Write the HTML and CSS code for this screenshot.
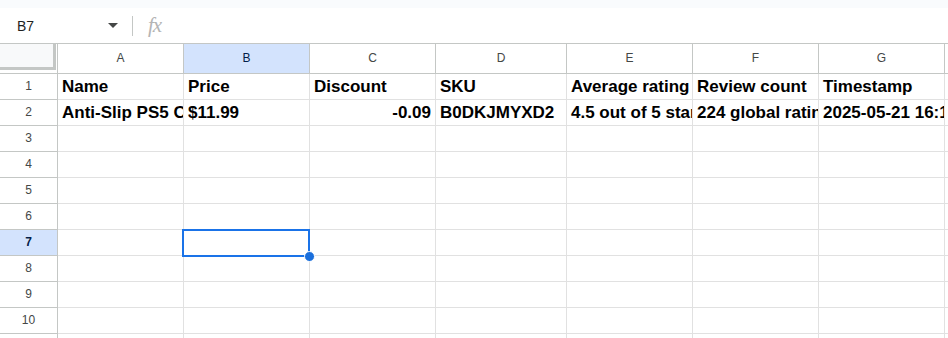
FILE: index.html
```html
<!DOCTYPE html>
<html lang="en">
<head>
    <meta charset="UTF-8">
    <title>Sheet</title>
    <link rel="stylesheet" href="styles.css">
</head>
<body>
    <div class="topband"></div>

    <div class="formula-bar">
        <div class="name-box">
            <span>B7</span>
            <span class="caret"></span>
        </div>
        <div class="divider"></div>
        <div class="fx">fx</div>
    </div>

    <div class="sheet">
        <div class="corner"><div class="corner-inner"></div></div>
        <div class="col-head">A</div>
        <div class="col-head selected">B</div>
        <div class="col-head">C</div>
        <div class="col-head">D</div>
        <div class="col-head">E</div>
        <div class="col-head">F</div>
        <div class="col-head">G</div>
        <div class="col-head">H</div>

        <div class="row-head">1</div>
        <div class="cell">Name</div>
        <div class="cell">Price</div>
        <div class="cell">Discount</div>
        <div class="cell">SKU</div>
        <div class="cell">Average rating</div>
        <div class="cell">Review count</div>
        <div class="cell">Timestamp</div>
        <div class="cell"></div>

        <div class="row-head">2</div>
        <div class="cell">Anti-Slip PS5 Controller Grip</div>
        <div class="cell">$11.99</div>
        <div class="cell num">-0.09</div>
        <div class="cell">B0DKJMYXD2</div>
        <div class="cell">4.5 out of 5 stars</div>
        <div class="cell">224 global ratings</div>
        <div class="cell">2025-05-21 16:12:04</div>
        <div class="cell"></div>

        <div class="row-head">3</div>
        <div class="cell"></div><div class="cell"></div><div class="cell"></div><div class="cell"></div>
        <div class="cell"></div><div class="cell"></div><div class="cell"></div><div class="cell"></div>

        <div class="row-head">4</div>
        <div class="cell"></div><div class="cell"></div><div class="cell"></div><div class="cell"></div>
        <div class="cell"></div><div class="cell"></div><div class="cell"></div><div class="cell"></div>

        <div class="row-head">5</div>
        <div class="cell"></div><div class="cell"></div><div class="cell"></div><div class="cell"></div>
        <div class="cell"></div><div class="cell"></div><div class="cell"></div><div class="cell"></div>

        <div class="row-head">6</div>
        <div class="cell"></div><div class="cell"></div><div class="cell"></div><div class="cell"></div>
        <div class="cell"></div><div class="cell"></div><div class="cell"></div><div class="cell"></div>

        <div class="row-head selected">7</div>
        <div class="cell"></div>
        <div class="cell active">
            <div class="selection"></div>
            <div class="fill-handle"></div>
        </div>
        <div class="cell"></div><div class="cell"></div>
        <div class="cell"></div><div class="cell"></div><div class="cell"></div><div class="cell"></div>

        <div class="row-head">8</div>
        <div class="cell"></div><div class="cell"></div><div class="cell"></div><div class="cell"></div>
        <div class="cell"></div><div class="cell"></div><div class="cell"></div><div class="cell"></div>

        <div class="row-head">9</div>
        <div class="cell"></div><div class="cell"></div><div class="cell"></div><div class="cell"></div>
        <div class="cell"></div><div class="cell"></div><div class="cell"></div><div class="cell"></div>

        <div class="row-head">10</div>
        <div class="cell"></div><div class="cell"></div><div class="cell"></div><div class="cell"></div>
        <div class="cell"></div><div class="cell"></div><div class="cell"></div><div class="cell"></div>

        <div class="row-head">11</div>
        <div class="cell"></div><div class="cell"></div><div class="cell"></div><div class="cell"></div>
        <div class="cell"></div><div class="cell"></div><div class="cell"></div><div class="cell"></div>
    </div>
</body>
</html>
```

FILE: styles.css
```css
body {
    margin: 0;
    font-family: "Liberation Sans", Arial, sans-serif;
    background: #fff;
    overflow: hidden;
}
.topband {
    height: 8px;
    background: #f9fbfd;
}
.formula-bar {
    height: 35px;
    display: flex;
    align-items: center;
}
.name-box {
    width: 121px;
    box-sizing: border-box;
    padding: 0 3px 0 17px;
    display: flex;
    align-items: center;
    justify-content: space-between;
    font-size: 14px;
    color: #1f1f1f;
}
.caret {
    width: 0;
    height: 0;
    border-left: 5px solid transparent;
    border-right: 5px solid transparent;
    border-top: 5px solid #444746;
}
.divider {
    width: 1px;
    height: 20px;
    margin-left: 11px;
    background: #c4c7c5;
}
.fx {
    margin-left: 15px;
    font-family: "Liberation Serif", serif;
    font-style: italic;
    font-size: 21px;
    color: #b4b4b4;
    letter-spacing: -1px;
}
.sheet {
    border-top: 1px solid #c4c7c5;
    display: grid;
    width: 1071px;
    grid-template-columns: 58px 126px 126px 126px 131px 126px 126px 126px 126px;
    grid-template-rows: 30px;
    grid-auto-rows: 26px;
}
.sheet > div {
    box-sizing: border-box;
    border-right: 1px solid #e1e1e1;
    border-bottom: 1px solid #e1e1e1;
    overflow: hidden;
    white-space: nowrap;
}
.corner {
    border-color: #c4c7c5 !important;
}
.corner-inner {
    width: 56px;
    height: 26px;
    box-sizing: border-box;
    background: #f8f9fa;
    border-right: 3px solid #c4c7c5;
    border-bottom: 3px solid #c4c7c5;
}
.col-head {
    font-size: 12px;
    line-height: 29px;
    text-align: center;
    color: #444746;
    border-color: #c4c7c5 !important;
}
.row-head {
    font-size: 12px;
    line-height: 25px;
    text-align: center;
    color: #444746;
    border-color: #c4c7c5 !important;
}
.selected {
    background: #d3e3fd;
    color: #041e49;
}
.row-head.selected {
    font-weight: bold;
}
.cell {
    padding: 1px 4px 0;
    font-size: 17px;
    line-height: 24px;
    font-weight: bold;
    color: #000;
}
.num {
    text-align: right;
}
.sheet > .active {
    position: relative;
    overflow: visible;
}
.selection {
    position: absolute;
    top: -1px;
    left: -2px;
    right: -1px;
    bottom: -2px;
    border: 2px solid #1a73e8;
}
.fill-handle {
    position: absolute;
    right: -6px;
    bottom: -7px;
    width: 11px;
    height: 11px;
    box-sizing: border-box;
    border: 1px solid #fff;
    border-radius: 50%;
    background: #1a6fdc;
}
```
